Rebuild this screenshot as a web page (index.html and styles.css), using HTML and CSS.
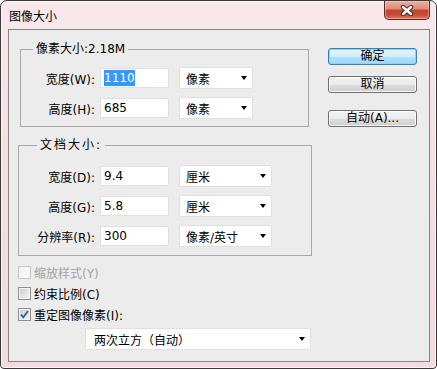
FILE: index.html
```html
<!DOCTYPE html>
<html>

<head>
	<title>图像大小</title>
	<link rel="stylesheet" href="styles.css">
</head>

<body>
	<div class="window">
		<div class="titlebar">
			<span class="title">图像大小</span>
			<button class="close" aria-label="关闭">
				<svg width="14" height="11" viewBox="0 0 14 11">
					<path d="M3 2 L11 9 M11 2 L3 9" stroke="#4a2a26" stroke-width="4.4" stroke-linecap="round" fill="none" />
					<path d="M3 2 L11 9 M11 2 L3 9" stroke="#ffffff" stroke-width="2.4" stroke-linecap="round" fill="none" />
				</svg>
			</button>
		</div>

		<div class="client">
			<div class="left">
				<fieldset class="group pixels">
					<legend>像素大小:2.18M</legend>
					<div class="row">
						<label>宽度(W):</label>
						<div class="field"><span class="sel">1110</span></div>
						<div class="dropdown">像素<i class="arrow"></i></div>
					</div>
					<div class="row">
						<label>高度(H):</label>
						<div class="field">685</div>
						<div class="dropdown">像素<i class="arrow"></i></div>
					</div>
				</fieldset>

				<fieldset class="group document">
					<legend>文档大小:</legend>
					<div class="row">
						<label>宽度(D):</label>
						<div class="field">9.4</div>
						<div class="dropdown">厘米<i class="arrow"></i></div>
					</div>
					<div class="row">
						<label>高度(G):</label>
						<div class="field">5.8</div>
						<div class="dropdown">厘米<i class="arrow"></i></div>
					</div>
					<div class="row">
						<label>分辨率(R):</label>
						<div class="field">300</div>
						<div class="dropdown">像素/英寸<i class="arrow"></i></div>
					</div>
				</fieldset>

				<div class="checks">
					<div class="check disabled"><span class="box"></span>缩放样式(Y)</div>
					<div class="check"><span class="box"></span>约束比例(C)</div>
					<div class="check"><span class="box">
							<svg width="11" height="11" viewBox="0 0 11 11">
								<path d="M2 5.5 L4.3 8.3 L9 2" stroke="#3a5ba0" stroke-width="1.8" fill="none" />
							</svg>
						</span>重定图像像素(I):</div>
				</div>

				<div class="dropdown method">两次立方（自动）<i class="arrow"></i></div>
			</div>

			<div class="buttons">
				<button class="btn default">确定</button>
				<button class="btn">取消</button>
				<button class="btn auto">自动(A)...</button>
			</div>
		</div>
	</div>
</body>

</html>
```

FILE: styles.css
```css
body {
	margin: 0;
	font-family: "DejaVu Sans", "Noto Sans CJK SC", sans-serif;
	font-size: 12px;
	color: #000;
}

.window {
	box-sizing: border-box;
	width: 437px;
	height: 369px;
	display: flex;
	flex-direction: column;
	border: 1px solid #3a3a3a;
	border-radius: 7px 7px 4px 4px;
	background: linear-gradient(180deg, #f9e9ec 0%, #f5dfe3 40%, #f3dbe0 100%);
	box-shadow: inset 0 0 0 1px rgba(255, 255, 255, 0.7);
}

.titlebar {
	height: 28px;
	display: flex;
	align-items: flex-start;
	flex-shrink: 0;
}

.title {
	padding: 8px 0 0 8px;
	line-height: 16px;
}

.close {
	margin: 0 6px 0 auto;
	width: 46px;
	height: 19px;
	padding: 0;
	display: flex;
	align-items: center;
	justify-content: center;
	border: 1px solid #5d2a22;
	border-top: none;
	border-radius: 0 0 5px 5px;
	background: linear-gradient(180deg, #eab0a3 0%, #dc8a77 45%, #c5432c 50%, #c84a33 75%, #dd7a62 100%);
	box-shadow: inset 0 0 0 1px rgba(255, 220, 210, 0.45);
}

.client {
	flex: 1;
	margin: 0 6px 6px 7px;
	display: flex;
	padding: 11px 0 0 9px;
	background-color: #ececec;
	border: 1px solid #858585;
}

.left {
	width: 293px;
	display: flex;
	flex-direction: column;
	align-items: flex-start;
}

.group {
	box-sizing: border-box;
	margin: 0;
	min-width: 0;
	padding: 10px 0 7px 0;
	border: 1px solid #a9a9a9;
	display: flex;
	flex-direction: column;
	gap: 8px;
}

.group legend {
	padding: 0 3px;
	line-height: 16px;
}

.pixels {
	width: 289px;
	margin-left: 2px;
}

.pixels legend {
	margin-left: 12px;
}

.document {
	width: 294px;
	margin-top: 10px;
	padding-top: 12px;
	padding-bottom: 8px;
}

.document legend {
	margin-left: 18px;
	letter-spacing: 2px;
}

.row {
	height: 22px;
	display: flex;
	align-items: center;
}

.row label {
	width: 74px;
	text-align: right;
	white-space: nowrap;
}

.document .row label {
	width: 76px;
}

.field {
	box-sizing: border-box;
	width: 69px;
	height: 20px;
	margin-left: 5px;
	padding-left: 3px;
	line-height: 18px;
	background-color: #fff;
	border: 1px solid #e0e0e0;
	border-radius: 2px;
}

.sel {
	display: inline-block;
	background-color: #3399ff;
	color: #fff;
	line-height: 16px;
}

.dropdown {
	box-sizing: border-box;
	width: 74px;
	height: 22px;
	margin-left: 10px;
	padding: 0 5px 0 6px;
	display: flex;
	align-items: center;
	background-color: #fff;
	border: 1px solid #e0e0e0;
	border-radius: 2px;
	white-space: nowrap;
}

.document .dropdown {
	width: 93px;
}

.arrow {
	margin-left: auto;
	width: 0;
	height: 0;
	border-left: 3.5px solid transparent;
	border-right: 3.5px solid transparent;
	border-top: 4px solid #000;
}

.checks {
	margin-top: 6px;
}

.check {
	height: 21px;
	display: flex;
	align-items: center;
	gap: 3px;
}

.box {
	box-sizing: border-box;
	width: 13px;
	height: 13px;
	display: flex;
	align-items: center;
	justify-content: center;
	border: 1px solid #8e8f8f;
	background: linear-gradient(135deg, #cdcdcd, #f6f6f6);
	box-shadow: inset 0 0 0 1px #f4f4f4;
}

.check.disabled {
	color: #a3a3a3;
}

.check.disabled .box {
	border-color: #c6c6c6;
	background: #f6f6f6;
}

.method {
	width: 226px;
	margin: 3px 0 0 67px;
	padding-left: 8px;
}

.buttons {
	margin-left: 17px;
	padding-top: 7px;
	display: flex;
	flex-direction: column;
	gap: 11px;
}

.btn {
	box-sizing: border-box;
	width: 89px;
	height: 17px;
	padding: 0;
	font-family: inherit;
	font-size: 12px;
	line-height: 15px;
	color: #000;
	border: 1px solid #707070;
	border-radius: 3px;
	background: linear-gradient(180deg, #f3f3f3 0%, #ebebeb 50%, #dddddd 50%, #cfcfcf 100%);
	box-shadow: inset 0 0 0 1px rgba(255, 255, 255, 0.8);
}

.btn.default {
	border-color: #3c7fb1;
	background: linear-gradient(180deg, #e6f5fd 0%, #d2eefc 50%, #b4e1f8 50%, #9fd6f3 100%);
	box-shadow: inset 0 0 0 1px #8fd3f5;
}

.btn.auto {
	margin-top: 6px;
}
```
